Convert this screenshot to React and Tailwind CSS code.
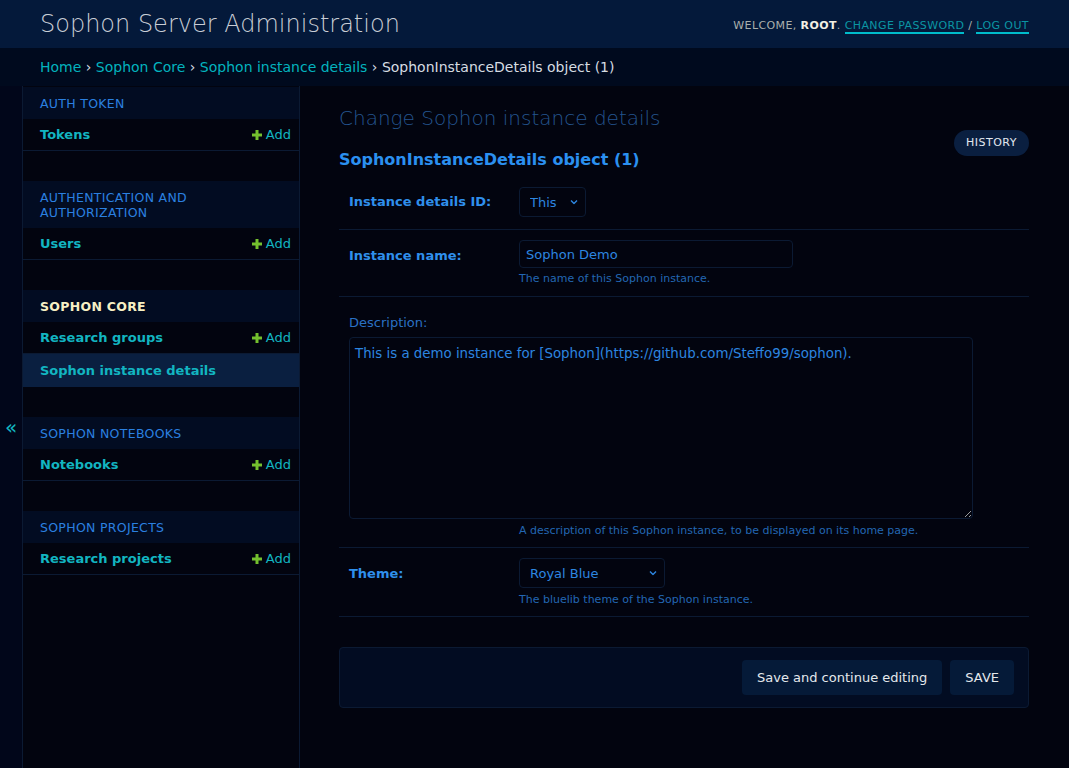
import React from 'react';

const sections = [
  { title: 'Auth Token', rows: [{ name: 'Tokens', add: true }] },
  { title: 'Authentication and Authorization', rows: [{ name: 'Users', add: true }] },
  {
    title: 'Sophon Core',
    current: true,
    rows: [
      { name: 'Research groups', add: true },
      { name: 'Sophon instance details', selected: true }
    ]
  },
  { title: 'Sophon Notebooks', rows: [{ name: 'Notebooks', add: true }] },
  { title: 'Sophon Projects', rows: [{ name: 'Research projects', add: true }] }
];

const PlusIcon = () => (
  <svg width="10" height="10" viewBox="0 0 10 10" className="mr-[4px]">
    <path d="M3.5 0h3v3.5H10v3H6.5V10h-3V6.5H0v-3h3.5z" fill="#74c02e" />
  </svg>
);

const Chevron = () => (
  <svg width="8" height="5" viewBox="0 0 8 5" className="pointer-events-none absolute right-[8px] top-1/2 -translate-y-1/2">
    <path d="M1 1l3 3 3-3" fill="none" stroke="#2d86e0" strokeWidth="1.4" />
  </svg>
);

const Sidebar = () => (
  <div className="w-[277px] shrink-0 border-r border-[#0b1a33] pt-px">
    {sections.map((s) => (
      <div key={s.title} className="mb-[30px]">
        <div
          className={`bg-[#020c22] pl-[17px] pr-2 pt-[9px] pb-[8px] text-[12.5px] leading-[15px] uppercase tracking-[0.3px] ${
            s.current ? 'font-bold text-[#f7f0c4]' : 'text-[#2b80e0]'
          }`}
        >
          {s.title}
        </div>
        {s.rows.map((r) => (
          <div
            key={r.name}
            className={`flex h-[32px] items-center justify-between pl-[17px] pr-2 text-[13px] ${
              r.selected ? 'h-[33px] bg-[#0a1f40]' : 'border-b border-[#0b1a33]'
            }`}
          >
            <span className="font-bold text-[#12b5c1]">{r.name}</span>
            {r.add && (
              <span className="flex items-center text-[#12b5c1]">
                <PlusIcon />
                Add
              </span>
            )}
          </div>
        ))}
      </div>
    ))}
  </div>
);

const FormRow = ({ children, className = '' }) => (
  <div className={`border-b border-[#0b1a33] px-[10px] ${className}`}>{children}</div>
);

export default function App() {
  return (
    <div className="flex min-h-screen flex-col bg-[#02040f] font-['DejaVu_Sans',sans-serif] text-[13px]">
      {/* Header */}
      <div className="flex h-[48px] shrink-0 items-center justify-between bg-[#04193a] px-10">
        <div className="text-[24px] font-light leading-none text-[#c9ced6]">Sophon Server Administration</div>
        <div className="pt-[5px] text-[11px] uppercase tracking-[0.4px] text-[#a9b0ad]">
          Welcome, <span className="font-semibold text-[#f2f0e4]">root</span>.{' '}
          <span className="border-b-2 border-[#00bccb] text-[#0b95a3]">Change password</span> /{' '}
          <span className="border-b-2 border-[#00bccb] text-[#0b95a3]">Log out</span>
        </div>
      </div>

      {/* Breadcrumbs */}
      <div className="flex h-[38px] shrink-0 items-center whitespace-pre bg-[#000a1e] px-10 text-[14px] text-[#d6dce2]">
        <span className="text-[#03b3bf]">Home</span>
        {' › '}
        <span className="text-[#03b3bf]">Sophon Core</span>
        {' › '}
        <span className="text-[#03b3bf]">Sophon instance details</span>
        {' › '}
        <span>SophonInstanceDetails object (1)</span>
      </div>

      <div className="flex flex-1">
        {/* Toggle */}
        <div className="flex w-[23px] shrink-0 items-center justify-center border-r border-[#0b1a33] bg-[#01061a]">
          <span className="text-[20px] leading-none text-[#12b5c1]">«</span>
        </div>

        <Sidebar />

        {/* Content */}
        <div className="flex-1 pl-[39px] pr-10 pt-5">
          <h1 className="text-[20px] font-light leading-[24px] text-[#24558f]">Change Sophon instance details</h1>
          <div className="flex items-start justify-between">
            <h2 className="pt-[20px] text-[16px] font-bold leading-[19px] text-[#2b90f0]">
              SophonInstanceDetails object (1)
            </h2>
            <div className="flex h-[26px] items-center rounded-full bg-[#0a1f40] px-3 pt-px text-[11px] uppercase tracking-[0.5px] text-[#e2e8f0]">
              History
            </div>
          </div>

          <div className="mt-[7px]">
            {/* Row 1 */}
            <FormRow className="flex items-center pt-[11px] pb-[12px]">
              <label className="w-[170px] font-bold text-[#2f8fec]">Instance details ID:</label>
              <div className="relative">
                <select className="h-[30px] w-[67px] appearance-none rounded-[4px] border border-[#0b1a33] bg-[#02040f] pl-[10px] pt-[2px] text-[13px] text-[#2d86e0]">
                  <option>This</option>
                </select>
                <Chevron />
              </div>
            </FormRow>

            {/* Row 2 */}
            <FormRow className="flex items-start pt-[10px] pb-[11px]">
              <label className="w-[170px] pt-[6px] font-bold text-[#2f8fec]">Instance name:</label>
              <div>
                <input
                  readOnly
                  value="Sophon Demo"
                  className="h-[28px] w-[274px] rounded-[4px] border border-[#0b1a33] bg-[#02040f] px-[6px] text-[13px] text-[#2d86e0] outline-none"
                />
                <div className="mt-[4px] text-[11px] leading-[13px] text-[#2367b3]">The name of this Sophon instance.</div>
              </div>
            </FormRow>

            {/* Row 3 */}
            <FormRow className="pt-[18px] pb-[10px]">
              <label className="block leading-[16px] text-[#2a71c4]">Description:</label>
              <textarea
                readOnly
                value="This is a demo instance for [Sophon](https://github.com/Steffo99/sophon)."
                className="mt-[6px] block h-[182px] w-[624px] rounded-[4px] border border-[#0b1a33] bg-[#02040f] px-[5px] pt-[6px] text-[13.35px] leading-[20px] text-[#2d86e0] outline-none"
              />
              <div className="ml-[170px] mt-[5px] text-[11px] leading-[13px] text-[#2367b3]">
                A description of this Sophon instance, to be displayed on its home page.
              </div>
            </FormRow>

            {/* Row 4 */}
            <FormRow className="flex items-start pt-[10px] pb-[10px]">
              <label className="w-[170px] pt-[6px] font-bold text-[#2f8fec]">Theme:</label>
              <div>
                <div className="relative w-[146px]">
                  <select className="h-[30px] w-[146px] appearance-none rounded-[4px] border border-[#0b1a33] bg-[#02040f] pl-[10px] pt-[2px] text-[13px] text-[#2d86e0]">
                    <option>Royal Blue</option>
                  </select>
                  <Chevron />
                </div>
                <div className="mt-[5px] text-[11px] leading-[13px] text-[#2367b3]">The bluelib theme of the Sophon instance.</div>
              </div>
            </FormRow>
          </div>

          {/* Submit row */}
          <div className="mt-[30px] flex h-[61px] items-center justify-end gap-2 rounded-[4px] border border-[#0b1a33] bg-[#020c22] pr-[14px]">
            <button className="h-[35px] rounded-[4px] bg-[#051a38] px-[15px] pt-px text-[13px] text-[#e4e8ec]">
              Save and continue editing
            </button>
            <button className="h-[35px] rounded-[4px] bg-[#051a38] px-[15px] pt-px text-[13px] uppercase text-[#e4e8ec]">
              Save
            </button>
          </div>
        </div>
      </div>
    </div>
  );
}
